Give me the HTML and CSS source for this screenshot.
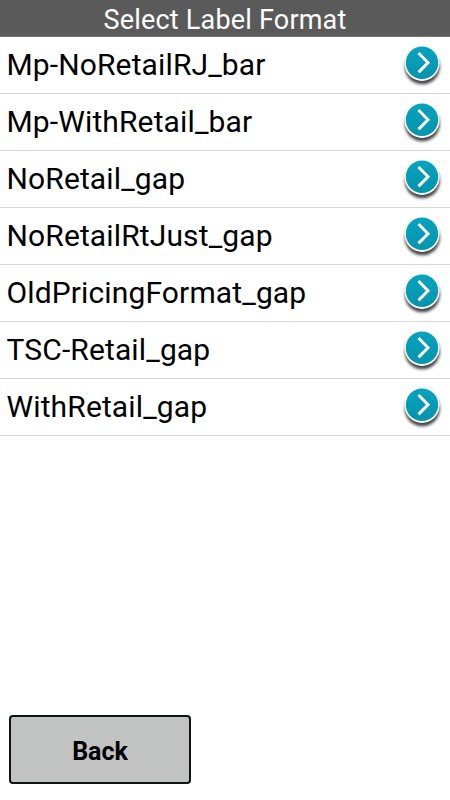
FILE: index.html
```html
<!DOCTYPE html>
<html lang="en">
<head>
    <meta charset="UTF-8">
    <meta name="viewport" content="width=device-width, initial-scale=1.0">
    <title>Select Label Format</title>
    <link rel="stylesheet" href="styles.css">
</head>
<body>
    <svg class="defs" width="0" height="0">
        <defs>
            <linearGradient id="teal" x1="0" y1="0" x2="0" y2="1">
                <stop offset="0" stop-color="#06a3bf"/>
                <stop offset="1" stop-color="#0594ad"/>
            </linearGradient>
            <filter id="soft" x="-20%" y="-20%" width="140%" height="140%">
                <feGaussianBlur stdDeviation="1.6"/>
            </filter>
            <symbol id="arrow" viewBox="0 0 44 48">
                <circle cx="22.300" cy="25.800" r="17.500" fill="#222" opacity="0.85" filter="url(#soft)"/>
                <circle cx="22" cy="22.300" r="17.600" fill="#fff"/>
                <circle cx="22" cy="21.700" r="16.200" fill="url(#teal)"/>
                <path d="M18.500 12L28 21.700L18.500 31.400" fill="none" stroke="#fff" stroke-width="3"/>
            </symbol>
        </defs>
    </svg>

    <h1 class="title">Select Label Format</h1>

    <ul class="formats">
        <li class="row"><span class="name">Mp-NoRetailRJ_bar</span><svg class="go"><use href="#arrow"/></svg></li>
        <li class="row"><span class="name">Mp-WithRetail_bar</span><svg class="go"><use href="#arrow"/></svg></li>
        <li class="row"><span class="name">NoRetail_gap</span><svg class="go"><use href="#arrow"/></svg></li>
        <li class="row"><span class="name">NoRetailRtJust_gap</span><svg class="go"><use href="#arrow"/></svg></li>
        <li class="row"><span class="name">OldPricingFormat_gap</span><svg class="go"><use href="#arrow"/></svg></li>
        <li class="row"><span class="name">TSC-Retail_gap</span><svg class="go"><use href="#arrow"/></svg></li>
        <li class="row"><span class="name">WithRetail_gap</span><svg class="go"><use href="#arrow"/></svg></li>
    </ul>

    <button class="back">Back</button>
</body>
</html>
```
FILE: styles.css
```css
* {
    box-sizing: border-box;
}

body {
    display: flex;
    flex-direction: column;
    height: 800px;
    margin: 0;
    font-family: Roboto, sans-serif;
    background-color: #fff;
    color: #000;
}

.defs {
    display: block;
}

.title {
    height: 37px;
    margin: 0;
    font-size: 27px;
    font-weight: 400;
    line-height: 40px;
    letter-spacing: 0.2px;
    text-align: center;
    background-color: #5a5a5a;
    border-bottom: 1px solid #777;
    color: #fff;
}

.formats {
    margin: 0;
    padding: 0;
    list-style: none;
}

.row {
    display: flex;
    align-items: center;
    justify-content: space-between;
    height: 57px;
    padding: 0 6px 0 6.5px;
    border-bottom: 1px solid #d8d8d8;
}

.name {
    padding-bottom: 2px;
    font-size: 30px;
    letter-spacing: 0.13px;
}

.go {
    width: 44px;
    height: 48px;
}

.back {
    width: 182px;
    height: 69px;
    margin: auto 0 16px 9px;
    padding: 3px 0 0;
    border: 2px solid #0c1513;
    border-radius: 4px;
    font-family: Roboto, sans-serif;
    font-size: 25px;
    font-weight: 700;
    background-color: #c1c3c2;
    color: #000;
}
```
